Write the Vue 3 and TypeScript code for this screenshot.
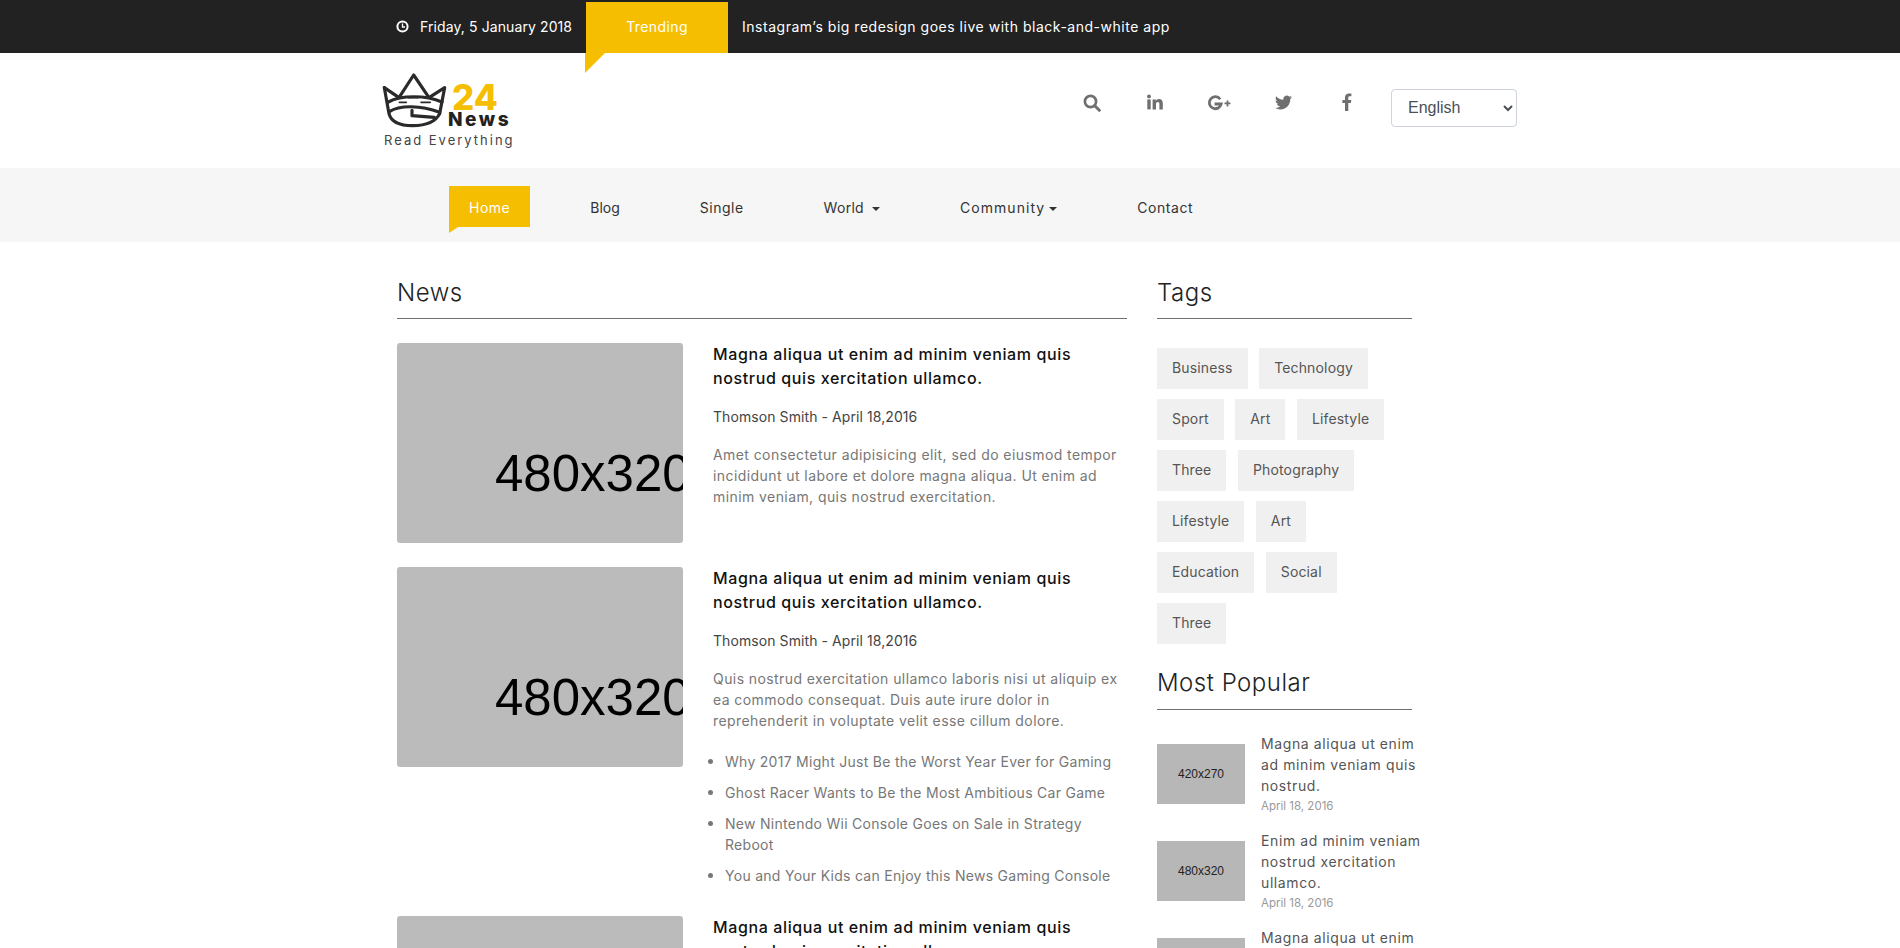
<script setup lang="ts">
interface Article {
  image: string
  title: string[]
  body: string[]
  bullets?: string[][]
}

const nav = [
  { label: 'Home', active: true, caret: false, spacing: 0.5 },
  { label: 'Blog', active: false, caret: false, spacing: 0 },
  { label: 'Single', active: false, caret: false, spacing: 0.5 },
  { label: 'World', active: false, caret: true, spacing: 0.3 },
  { label: 'Community', active: false, caret: true, spacing: 1.05 },
  { label: 'Contact', active: false, caret: false, spacing: 0.55 },
]

const heading = ['Magna aliqua ut enim ad minim veniam quis', 'nostrud quis xercitation ullamco.']

const articles: Article[] = [
  {
    image: '480x320',
    title: heading,
    body: [
      'Amet consectetur adipisicing elit, sed do eiusmod tempor',
      'incididunt ut labore et dolore magna aliqua. Ut enim ad',
      'minim veniam, quis nostrud exercitation.',
    ],
  },
  {
    image: '480x320',
    title: heading,
    body: [
      'Quis nostrud exercitation ullamco laboris nisi ut aliquip ex',
      'ea commodo consequat. Duis aute irure dolor in',
      'reprehenderit in voluptate velit esse cillum dolore.',
    ],
    bullets: [
      ['Why 2017 Might Just Be the Worst Year Ever for Gaming'],
      ['Ghost Racer Wants to Be the Most Ambitious Car Game'],
      ['New Nintendo Wii Console Goes on Sale in Strategy', 'Reboot'],
      ['You and Your Kids can Enjoy this News Gaming Console'],
    ],
  },
  {
    image: '480x320',
    title: heading,
    body: [
      'Amet consectetur adipisicing elit, sed do eiusmod tempor',
      'incididunt ut labore et dolore magna aliqua. Ut enim ad',
      'minim veniam, quis nostrud exercitation.',
    ],
  },
]

const tagRows = [
  ['Business', 'Technology'],
  ['Sport', 'Art', 'Lifestyle'],
  ['Three', 'Photography'],
  ['Lifestyle', 'Art'],
  ['Education', 'Social'],
  ['Three'],
]

const popular = [
  { image: '420x270', title: ['Magna aliqua ut enim', 'ad minim veniam quis', 'nostrud.'] },
  { image: '480x320', title: ['Enim ad minim veniam', 'nostrud xercitation', 'ullamco.'] },
  { image: '420x270', title: ['Magna aliqua ut enim', 'ad minim veniam quis', 'nostrud.'] },
]
</script>

<template>
  <div class="page">
    <div class="topbar">
      <div class="wrap topbar-inner">
        <span class="date">
          <svg class="clock" viewBox="0 0 13 13" width="13" height="13" aria-hidden="true">
            <circle cx="6.5" cy="6.5" r="5.1" fill="none" stroke="#fff" stroke-width="2" />
            <path d="M6.5 3.4V7H9" fill="none" stroke="#fff" stroke-width="1.3" />
          </svg>
          Friday, 5 January 2018
        </span>
        <span class="trending">Trending</span>
        <span class="headline">Instagram’s big redesign goes live with black-and-white app</span>
      </div>
    </div>

    <header class="wrap masthead">
      <div class="logo">
        <div class="logo-top">
          <svg class="crown" viewBox="30 215 201 174" width="67" height="58" aria-hidden="true">
            <g fill="none" stroke="#2a2a2a" stroke-width="9.5" stroke-linejoin="round" stroke-linecap="round">
              <path d="M40 262 L84 292 L128 224 L174 292 L221 262 L206 340" />
              <path d="M40 262 L54 340 C62 372 100 376 125 376 C150 376 190 372 206 340" />
              <path d="M52 305 C90 284 165 284 213 305" />
              <path d="M55 334 C85 314 150 314 206 336" />
              <path d="M123 330 V346 L190 351" />
              <path d="M112 292 H140 M85 306 H106 M150 306 H178" stroke-width="5" />
            </g>
          </svg>
          <div class="logo-words">
            <span class="logo-num">24</span>
            <span class="logo-news">News</span>
          </div>
        </div>
        <div class="logo-tag">Read Everything</div>
      </div>

      <div class="tools">
        <svg class="ico search" viewBox="0 0 18 18" width="18" height="18" aria-hidden="true">
          <circle cx="7.5" cy="7.5" r="5.6" fill="none" stroke="#6f6f6f" stroke-width="2.7" />
          <path d="M11.8 11.8L16.3 16.3" stroke="#6f6f6f" stroke-width="3" stroke-linecap="round" />
        </svg>
        <svg class="ico linkedin" viewBox="0 0 16 16" width="16" height="16" aria-hidden="true">
          <circle cx="2" cy="2.4" r="1.9" fill="#6f6f6f" />
          <rect x="0.3" y="5.4" width="3.4" height="10" fill="#6f6f6f" />
          <path d="M5.6 5.4H8.8V6.9C9.4 5.8 10.6 5.1 12 5.1C14.8 5.1 15.8 6.9 15.8 9.6V15.4H12.4V10.2C12.4 9 12.1 8 10.9 8C9.7 8 9 8.9 9 10.2V15.4H5.6Z" fill="#6f6f6f" />
        </svg>
        <svg class="ico gplus" viewBox="0 0 24 16" width="24" height="16" aria-hidden="true">
          <path d="M13.2 4.2A6 6 0 1 0 14.2 9H7.6" fill="none" stroke="#6f6f6f" stroke-width="2.8" />
          <path d="M20.5 5.4V11.4M17.5 8.4H23.5" stroke="#6f6f6f" stroke-width="1.8" />
        </svg>
        <svg class="ico twitter" viewBox="0 0 24 24" width="17" height="17" aria-hidden="true">
          <path fill="#6f6f6f" d="M23.953 4.57a10 10 0 01-2.825.775 4.958 4.958 0 002.163-2.723c-.951.555-2.005.959-3.127 1.184a4.92 4.92 0 00-8.384 4.482C7.69 8.095 4.067 6.13 1.64 3.162a4.822 4.822 0 00-.666 2.475c0 1.71.87 3.213 2.188 4.096a4.904 4.904 0 01-2.228-.616v.06a4.923 4.923 0 003.946 4.827 4.996 4.996 0 01-2.212.085 4.936 4.936 0 004.604 3.417 9.867 9.867 0 01-6.102 2.105c-.39 0-.779-.023-1.17-.067a13.995 13.995 0 007.557 2.209c9.053 0 13.998-7.496 13.998-13.985 0-.21 0-.42-.015-.63A9.935 9.935 0 0024 4.59z" />
        </svg>
        <svg class="ico facebook" viewBox="0 0 10 18" width="10" height="18" aria-hidden="true">
          <path fill="#6f6f6f" d="M3 18V10H0.4V7H3V4.6C3 1.8 4.6 0.4 7 0.4C8.1 0.4 9 0.5 9.4 0.6V3.2H7.8C6.6 3.2 6.3 3.8 6.3 4.7V7H9.3L8.9 10H6.3V18Z" />
        </svg>
        <select class="lang">
          <option>English</option>
          <option>Français</option>
        </select>
      </div>
    </header>

    <nav class="navbar">
      <div class="wrap nav-inner">
        <a
          v-for="item in nav"
          :key="item.label"
          class="nav-link"
          :class="{ active: item.active }"
        >
          <span :style="{ letterSpacing: item.spacing + 'px' }">{{ item.label }}</span><i v-if="item.caret" class="caret" :class="item.label.toLowerCase()"></i>
        </a>
      </div>
    </nav>

    <main class="wrap content">
      <section class="feed">
        <h2 class="section-title">News</h2>
        <article v-for="(a, i) in articles" :key="i" class="article">
          <div class="thumb"><span>{{ a.image }}</span></div>
          <div class="article-body">
            <h3 class="article-title">
              <span v-for="line in a.title" :key="line">{{ line }}</span>
            </h3>
            <p class="meta">Thomson Smith - April 18,2016</p>
            <p class="excerpt">
              <span v-for="line in a.body" :key="line">{{ line }}</span>
            </p>
            <ul v-if="a.bullets" class="bullets">
              <li v-for="b in a.bullets" :key="b[0]">
                <span v-for="line in b" :key="line">{{ line }}</span>
              </li>
            </ul>
          </div>
        </article>
      </section>

      <aside class="side">
        <h2 class="section-title">Tags</h2>
        <div class="tags">
          <div v-for="(row, r) in tagRows" :key="r" class="tag-row">
            <a v-for="tag in row" :key="tag" class="tag">{{ tag }}</a>
          </div>
        </div>
        <h2 class="section-title popular-title">Most Popular</h2>
        <div class="popular">
          <div v-for="(p, i) in popular" :key="i" class="pop-item">
            <div class="pop-thumb">{{ p.image }}</div>
            <div class="pop-text">
              <span v-for="line in p.title" :key="line" class="pop-line">{{ line }}</span>
              <span class="pop-date">April 18, 2016</span>
            </div>
          </div>
        </div>
      </aside>
    </main>
  </div>
</template>

<style>
html, body { margin: 0; background: #fff; overflow: hidden; }
</style>

<style scoped>
.page {
  height: 948px;
  overflow: hidden;
  font-family: "Inter", "Open Sans", sans-serif;
  color: #222;
  font-size: 14px;
}
.wrap { width: 1140px; margin: 0 auto; box-sizing: border-box; }

.topbar { height: 53px; background: #222; color: #fff; padding-top: 2px; box-sizing: border-box; }
.topbar-inner { display: flex; height: 51px; align-items: center; padding-left: 16px; font-size: 14px; }
.date { display: flex; align-items: center; width: 190px; white-space: nowrap; letter-spacing: 0.1px; padding-bottom: 2px; box-sizing: border-box; }
.clock { margin-right: 11px; }
.trending {
  position: relative;
  width: 142px;
  height: 51px;
  line-height: 49px;
  text-align: center;
  background: #f5be00;
  margin-right: 14px;
  letter-spacing: 0.4px;
}
.trending::after {
  content: "";
  position: absolute;
  left: -1px;
  top: 51px;
  border-top: 20px solid #f5be00;
  border-right: 20px solid transparent;
}
.headline { white-space: nowrap; letter-spacing: 0.52px; padding-bottom: 2px; }

.masthead { height: 115px; display: flex; justify-content: space-between; position: relative; }
.logo { padding: 19px 0 0 1px; }
.logo-top { display: flex; height: 58px; }
.crown { flex: none; }
.logo-words { display: flex; flex-direction: column; margin-left: 1px; }
.logo-num { font-size: 35px; line-height: 26px; font-weight: 800; color: #f5be00; margin: 12px 0 0 3px; }
.logo-news { font-size: 19px; line-height: 17px; font-weight: 800; letter-spacing: 2.5px; color: #222; margin: 1px 0 0 -1px; }
.logo-tag { font-size: 13px; line-height: 14px; margin: 3px 0 0 3px; letter-spacing: 2px; color: #444; white-space: nowrap; }

.tools { display: flex; align-items: flex-start; padding-right: 3px; }
.ico { display: block; flex: none; }
.search { margin-top: 41px; margin-right: 46px; }
.linkedin { margin-top: 41px; margin-right: 44px; }
.gplus { margin-top: 42px; margin-right: 44px; }
.twitter { margin-top: 41px; margin-right: 50px; }
.facebook { margin-top: 40px; margin-right: 39px; }
.lang {
  width: 126px;
  height: 38px;
  margin-top: 36px;
  padding: 5px 8px 7px 12px;
  background: #fff;
  border: 1px solid #ced4da;
  border-radius: 4px;
  font-family: "Liberation Sans", sans-serif;
  font-size: 16px;
  color: #495057;
}

.navbar { height: 74px; background: #f6f6f6; }
.nav-inner { display: flex; padding: 18px 0 0 69px; font-size: 14px; }
.nav-link {
  position: relative;
  height: 41px;
  line-height: 43px;
  padding: 0 20px;
  margin-right: 40px;
  color: #333;
  white-space: nowrap;
}
.nav-link.active { background: #f5be00; color: #fff; }
.nav-link.active::after {
  content: "";
  position: absolute;
  left: 0;
  top: 41px;
  border-top: 6px solid #f5be00;
  border-right: 9px solid transparent;
}
.caret {
  display: inline-block;
  vertical-align: 2px;
  border-top: 4px solid #333;
  border-left: 4px solid transparent;
  border-right: 4px solid transparent;
}
.caret.world { margin-left: 8px; }
.caret.community { margin-left: 4px; }

.content { display: flex; padding: 30px 0 0 17px; gap: 30px; align-items: flex-start; }
.feed { width: 730px; flex: none; }
.side { width: 255px; flex: none; }

.section-title {
  margin: 0 0 24px;
  height: 46px;
  line-height: 42px;
  font-size: 24px;
  font-weight: 300;
  letter-spacing: 0.5px;
  color: #222;
  border-bottom: 1px solid #6f6f6f;
}

.article { display: flex; margin-bottom: 24px; }
.thumb {
  flex: none;
  width: 286px;
  height: 200px;
  background: #bbb;
  border-radius: 3px;
  overflow: hidden;
  display: flex;
  align-items: center;
  padding: 60px 0 0 98px;
  box-sizing: border-box;
  font-family: "Liberation Sans", sans-serif;
  font-size: 51px;
  color: #000;
  white-space: nowrap;
}
.article-body { padding-left: 30px; flex: 1; min-width: 0; }
.article-title { margin: -1px 0 0; font-size: 16px; line-height: 24px; font-weight: 500; color: #111; letter-spacing: 0.62px; }
.article-title span, .excerpt span, .bullets span { display: block; white-space: nowrap; }
.meta { margin: 16px 0 0; font-size: 14px; line-height: 21px; color: #444; letter-spacing: 0.08px; }
.excerpt { margin: 17px 0 0; font-size: 14px; line-height: 21px; color: #777; letter-spacing: 0.42px; }
.bullets { margin: 20px 0 0; padding: 0 0 0 12px; list-style: none; color: #777; font-size: 14px; line-height: 21px; letter-spacing: 0.28px; }
.bullets li { position: relative; margin-bottom: 10px; }
.bullets li:last-child { margin-bottom: 6px; }
.bullets li::before {
  content: "";
  position: absolute;
  left: -17px;
  top: 8px;
  width: 5px;
  height: 5px;
  border-radius: 50%;
  background: #777;
}

.tags { display: flex; flex-direction: column; gap: 10px; margin-top: 29px; }
.tag-row { display: flex; gap: 11.5px; }
.tag {
  height: 41px;
  line-height: 39px;
  padding: 0 15px;
  background: #f0f0f0;
  color: #555;
  font-size: 14px;
  white-space: nowrap;
  letter-spacing: 0.15px;
}
.popular-title { margin-top: 19px; margin-bottom: 23px; line-height: 40px; }
.pop-item { display: flex; height: 97px; }
.pop-thumb {
  flex: none;
  width: 88px;
  height: 60px;
  margin-top: 11px;
  background: #b7b7b7;
  color: #222;
  font-family: "Liberation Sans", sans-serif;
  font-size: 12px;
  line-height: 60px;
  text-align: center;
}
.pop-text { padding-left: 16px; display: flex; flex-direction: column; }
.pop-line { font-size: 14px; line-height: 21px; color: #555; white-space: nowrap; letter-spacing: 0.6px; }
.pop-date { font-size: 11.5px; line-height: 18px; margin-top: 1px; color: #999; white-space: nowrap; }
</style>
